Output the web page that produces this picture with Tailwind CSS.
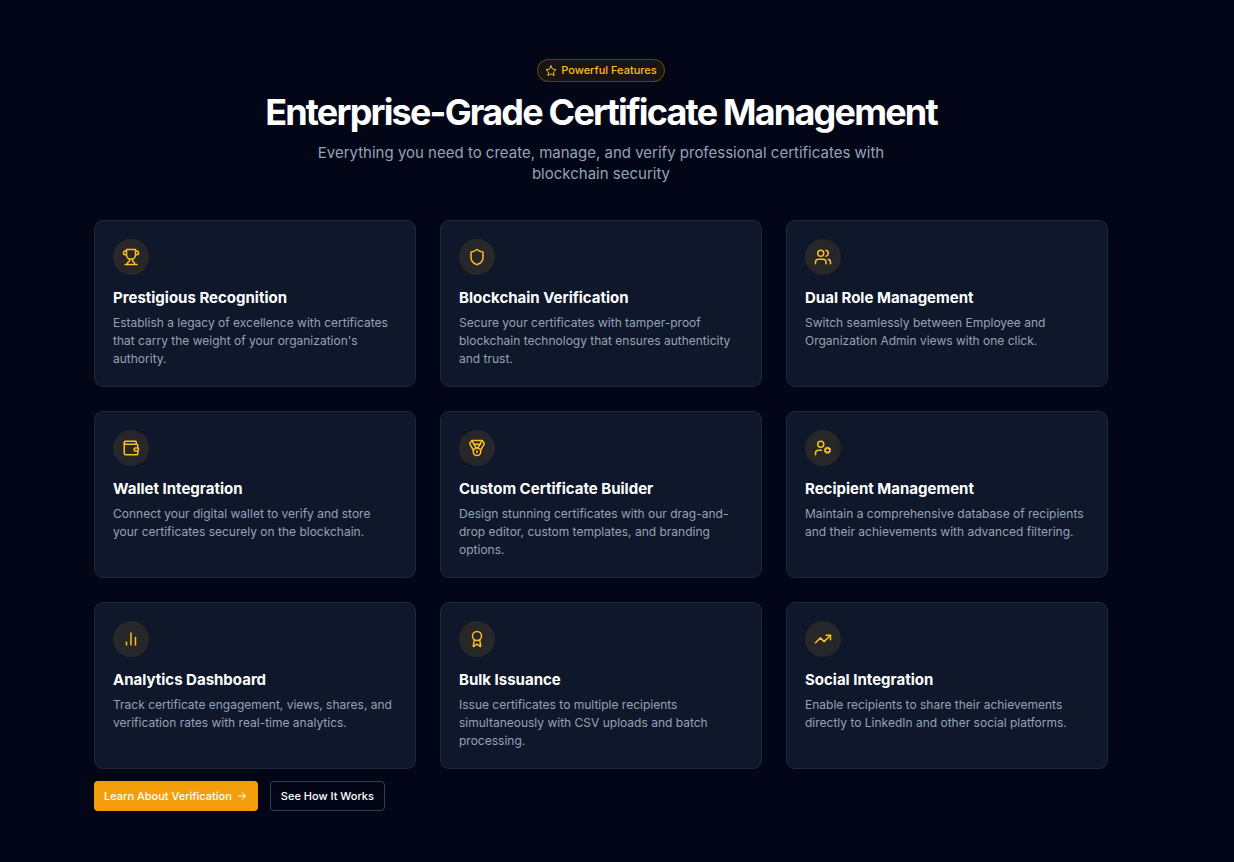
<!DOCTYPE html>
<html lang="en">

<head>
    <meta charset="UTF-8" />
    <meta name="viewport" content="width=device-width, initial-scale=1.0" />
    <title>Enterprise-Grade Certificate Management</title>
    <script src="https://cdn.jsdelivr.net/npm/@tailwindcss/browser@4"></script>
</head>

<body class="bg-[#020617] font-['Inter',sans-serif] text-white">
<main class="min-h-screen pl-4 pr-12 pt-[59px] pb-12">
    <div class="max-w-[1014px] mx-auto">
        <!-- Header -->
        <header class="flex flex-col items-center text-center mb-9">
            <div class="flex items-center gap-1 h-[23px] px-[7px] rounded-full border border-[#f59e0b]/30 bg-[#f59e0b]/10 text-[#fbbf24] text-[11px] font-medium">
                <svg class="size-3" viewBox="0 0 24 24" fill="none" stroke="currentColor" stroke-width="2" stroke-linecap="round" stroke-linejoin="round"><polygon points="12 2 15.09 8.26 22 9.27 17 14.14 18.18 21.02 12 17.77 5.82 21.02 7 14.14 2 9.27 8.91 8.26 12 2" /></svg>
                Powerful Features
            </div>
            <h1 class="mt-3 text-[36px] leading-9 font-bold tracking-tighter">Enterprise-Grade Certificate Management</h1>
            <p class="mt-3 max-w-[576px] text-[15px] leading-[21px] text-[#94a3b8]">Everything you need to create, manage, and verify professional certificates with blockchain security</p>
        </header>

        <!-- Features -->
        <section id="features" class="grid grid-cols-1 sm:grid-cols-2 lg:grid-cols-3 gap-6"></section>

        <!-- Actions -->
        <div class="flex flex-wrap gap-3 mt-3">
            <button class="flex items-center gap-1 h-[30px] px-[10px] rounded bg-[#f59e0b] text-[11px] font-medium hover:bg-[#d97706]">
                Learn About Verification
                <svg class="size-3" viewBox="0 0 24 24" fill="none" stroke="currentColor" stroke-width="2" stroke-linecap="round" stroke-linejoin="round"><path d="M5 12h14" /><path d="m12 5 7 7-7 7" /></svg>
            </button>
            <button class="h-[30px] px-[10px] rounded border border-[#334155] text-[11px] font-medium hover:bg-[#1e293b]">See How It Works</button>
        </div>
    </div>
</main>

<script>
    const features = [
      { title: "Prestigious Recognition", text: "Establish a legacy of excellence with certificates that carry the weight of your organization's authority.",
        icon: '<path d="M6 9H4.5a2.5 2.5 0 0 1 0-5H6"/><path d="M18 9h1.5a2.5 2.5 0 0 0 0-5H18"/><path d="M4 22h16"/><path d="M10 14.66V17c0 .55-.47.98-.97 1.21C7.85 18.75 7 20.24 7 22"/><path d="M14 14.66V17c0 .55.47.98.97 1.21C16.15 18.75 17 20.24 17 22"/><path d="M18 2H6v7a6 6 0 0 0 12 0V2Z"/>' },
      { title: "Blockchain Verification", text: "Secure your certificates with tamper-proof blockchain technology that ensures authenticity and trust.",
        icon: '<path d="M20 13c0 5-3.5 7.5-7.66 8.95a1 1 0 0 1-.67-.01C7.5 20.5 4 18 4 13V6a1 1 0 0 1 1-1c2 0 4.5-1.2 6.24-2.72a1.17 1.17 0 0 1 1.52 0C14.51 3.81 17 5 19 5a1 1 0 0 1 1 1z"/>' },
      { title: "Dual Role Management", text: "Switch seamlessly between Employee and Organization Admin views with one click.",
        icon: '<path d="M16 21v-2a4 4 0 0 0-4-4H6a4 4 0 0 0-4 4v2"/><circle cx="9" cy="7" r="4"/><path d="M22 21v-2a4 4 0 0 0-3-3.87"/><path d="M16 3.13a4 4 0 0 1 0 7.75"/>' },
      { title: "Wallet Integration", text: "Connect your digital wallet to verify and store your certificates securely on the blockchain.",
        icon: '<path d="M19 7V4a1 1 0 0 0-1-1H5a2 2 0 0 0 0 4h15a1 1 0 0 1 1 1v4h-3a2 2 0 0 0 0 4h3a1 1 0 0 0 1-1v-2a1 1 0 0 0-1-1"/><path d="M3 5v14a2 2 0 0 0 2 2h15a1 1 0 0 0 1-1v-4"/>' },
      { title: "Custom Certificate Builder", text: "Design stunning certificates with our drag-and-drop editor, custom templates, and branding options.",
        icon: '<path d="M7.21 15 2.66 7.14a2 2 0 0 1 .13-2.2L4.4 2.8A2 2 0 0 1 6 2h12a2 2 0 0 1 1.6.8l1.6 2.14a2 2 0 0 1 .14 2.2L16.79 15"/><path d="M11 12 5.12 2.2"/><path d="m13 12 5.88-9.8"/><path d="M8 7h8"/><circle cx="12" cy="17" r="5"/><path d="M12 18v-2h-.5"/>' },
      { title: "Recipient Management", text: "Maintain a comprehensive database of recipients and their achievements with advanced filtering.",
        icon: '<circle cx="18" cy="15" r="3"/><circle cx="9" cy="7" r="4"/><path d="M10 15H6a4 4 0 0 0-4 4v2"/><path d="m21.7 16.4-.9-.3"/><path d="m15.2 13.9-.9-.3"/><path d="m16.6 18.7.3-.9"/><path d="m19.1 12.2.3-.9"/><path d="m19.6 18.7-.4-1"/><path d="m16.8 12.3-.4-1"/><path d="m14.3 16.6 1-.4"/><path d="m20.7 13.8 1-.4"/>' },
      { title: "Analytics Dashboard", text: "Track certificate engagement, views, shares, and verification rates with real-time analytics.",
        icon: '<path d="M12 20V4"/><path d="M18 20V10"/><path d="M6 20v-4"/>' },
      { title: "Bulk Issuance", text: "Issue certificates to multiple recipients simultaneously with CSV uploads and batch processing.",
        icon: '<circle cx="12" cy="8" r="6"/><path d="m15.477 12.89 1.515 8.526a.5.5 0 0 1-.81.47l-3.58-2.687a1 1 0 0 0-1.197 0l-3.586 2.686a.5.5 0 0 1-.81-.469l1.514-8.526"/>' },
      { title: "Social Integration", text: "Enable recipients to share their achievements directly to LinkedIn and other social platforms.",
        icon: '<path d="M22 7 13.5 15.5 8.5 10.5 2 17"/><path d="M16 7h6v6"/>' }
    ];

    document.getElementById("features").innerHTML = features.map(f => `
      <article class="p-[18px] rounded-[9px] border border-[#1e293b] bg-[#0f172a]">
        <div class="flex items-center justify-center size-9 mb-3 rounded-full bg-[#fbbf24]/10 text-[#fbbf24]">
          <svg class="size-[18px]" viewBox="0 0 24 24" fill="none" stroke="currentColor" stroke-width="2" stroke-linecap="round" stroke-linejoin="round">${f.icon}</svg>
        </div>
        <h3 class="mb-[6px] text-[15px] leading-[21px] font-bold">${f.title}</h3>
        <p class="text-[12px] leading-[18px] text-[#94a3b8]">${f.text}</p>
      </article>
    `).join("");
</script>
</body>

</html>
